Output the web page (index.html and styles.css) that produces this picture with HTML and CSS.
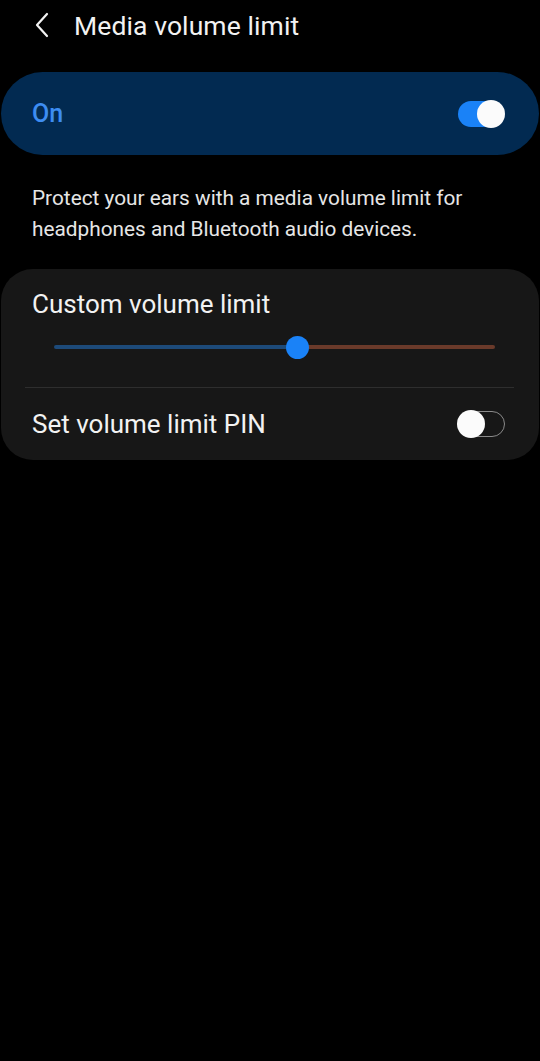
FILE: index.html
```html
<!DOCTYPE html>
<html lang="en">
<head>
  <meta charset="UTF-8">
  <title>Media volume limit</title>
  <link rel="stylesheet" href="styles.css">
  <meta name="viewport" content="width=device-width, initial-scale=1.0">
</head>
<body>

<header class="topbar">
  <svg class="back" width="16" height="26" viewBox="0 0 16 26">
    <path d="M13 2 L3 13 L13 24" fill="none" stroke="#f2f2f2" stroke-width="2.2" stroke-linecap="round" stroke-linejoin="round"/>
  </svg>
  <h1 class="title">Media volume limit</h1>
</header>

<div class="master">
  <span class="master-label">On</span>
  <div class="switch on"><div class="knob"></div></div>
</div>

<p class="desc">Protect your ears with a media volume limit for headphones and Bluetooth audio devices.</p>

<div class="card">
  <div class="row slider-row">
    <div class="row-label">Custom volume limit</div>
    <div class="slider">
      <div class="track-left"></div>
      <div class="thumb"></div>
      <div class="track-right"></div>
    </div>
  </div>
  <hr class="divider">
  <div class="row pin-row">
    <div class="row-label">Set volume limit PIN</div>
    <div class="switch off"><div class="knob"></div></div>
  </div>
</div>

</body>
</html>
```

FILE: styles.css
```css
:root {
  --bg-color: #000000;
  --text-color: #f2f2f2;
  --accent-color: #1a82f7;
  --card-color: #171717;
  --master-color: #022a51;
}

body {
  background-color: var(--bg-color);
  color: var(--text-color);
  font-family: Roboto, "Noto Sans", sans-serif;
  margin: 0;
  width: 540px;
  height: 1061px;
  overflow: hidden;
}

.topbar {
  display: flex;
  align-items: center;
  height: 50px;
  padding-left: 34px;
}

.back {
  margin-right: 24px;
}

.title {
  margin: 0;
  font-size: 26.5px;
  font-weight: 400;
  letter-spacing: 0.1px;
}

.master {
  display: flex;
  align-items: center;
  justify-content: space-between;
  margin: 22px 1px 0 1px;
  height: 83px;
  padding: 0 35px 0 31px;
  border-radius: 42px;
  background-color: var(--master-color);
}

.master-label {
  color: #3d8df2;
  font-size: 25px;
  font-weight: 500;
}

/* toggle switch */
.switch {
  position: relative;
  width: 46px;
  height: 26px;
  border-radius: 13px;
  box-sizing: border-box;
}

.switch .knob {
  position: absolute;
  top: -1px;
  width: 28px;
  height: 28px;
  border-radius: 50%;
  background-color: #fbfbfb;
}

.switch.on {
  background-color: var(--accent-color);
}

.switch.on .knob {
  right: -1px;
}

.switch.off {
  border: 1.5px solid #8a8a8a;
  margin-right: -2px;
}

.switch.off .knob {
  left: -3px;
  top: -2.5px;
}

.desc {
  margin: 28px 32px 0 32px;
  font-size: 20.8px;
  line-height: 31px;
  color: #e6e6e6;
}

.card {
  margin: 24px 1px 0 1px;
  background-color: var(--card-color);
  border-radius: 32px;
  padding: 20px 0 0 0;
}

.row {
  padding: 0 36px 0 31px;
}

.row-label {
  font-size: 26px;
  line-height: 30px;
}

.slider {
  display: flex;
  align-items: center;
  margin: 16px 0 0 22px;
  width: 441px;
  height: 24px;
}

.track-left {
  width: 234px;
  height: 4px;
  border-radius: 2px;
  background-color: #1d4a79;
}

.thumb {
  width: 23px;
  height: 23px;
  border-radius: 50%;
  background-color: var(--accent-color);
  margin: 0 -2px;
  position: relative;
}

.track-right {
  flex: 1;
  height: 4px;
  border-radius: 2px;
  background-color: #6a3a2a;
}

.divider {
  border: none;
  height: 1px;
  background-color: #2e2e2e;
  margin: 28px 25px 0 24px;
}

.pin-row {
  display: flex;
  align-items: center;
  justify-content: space-between;
  height: 72px;
}
```
